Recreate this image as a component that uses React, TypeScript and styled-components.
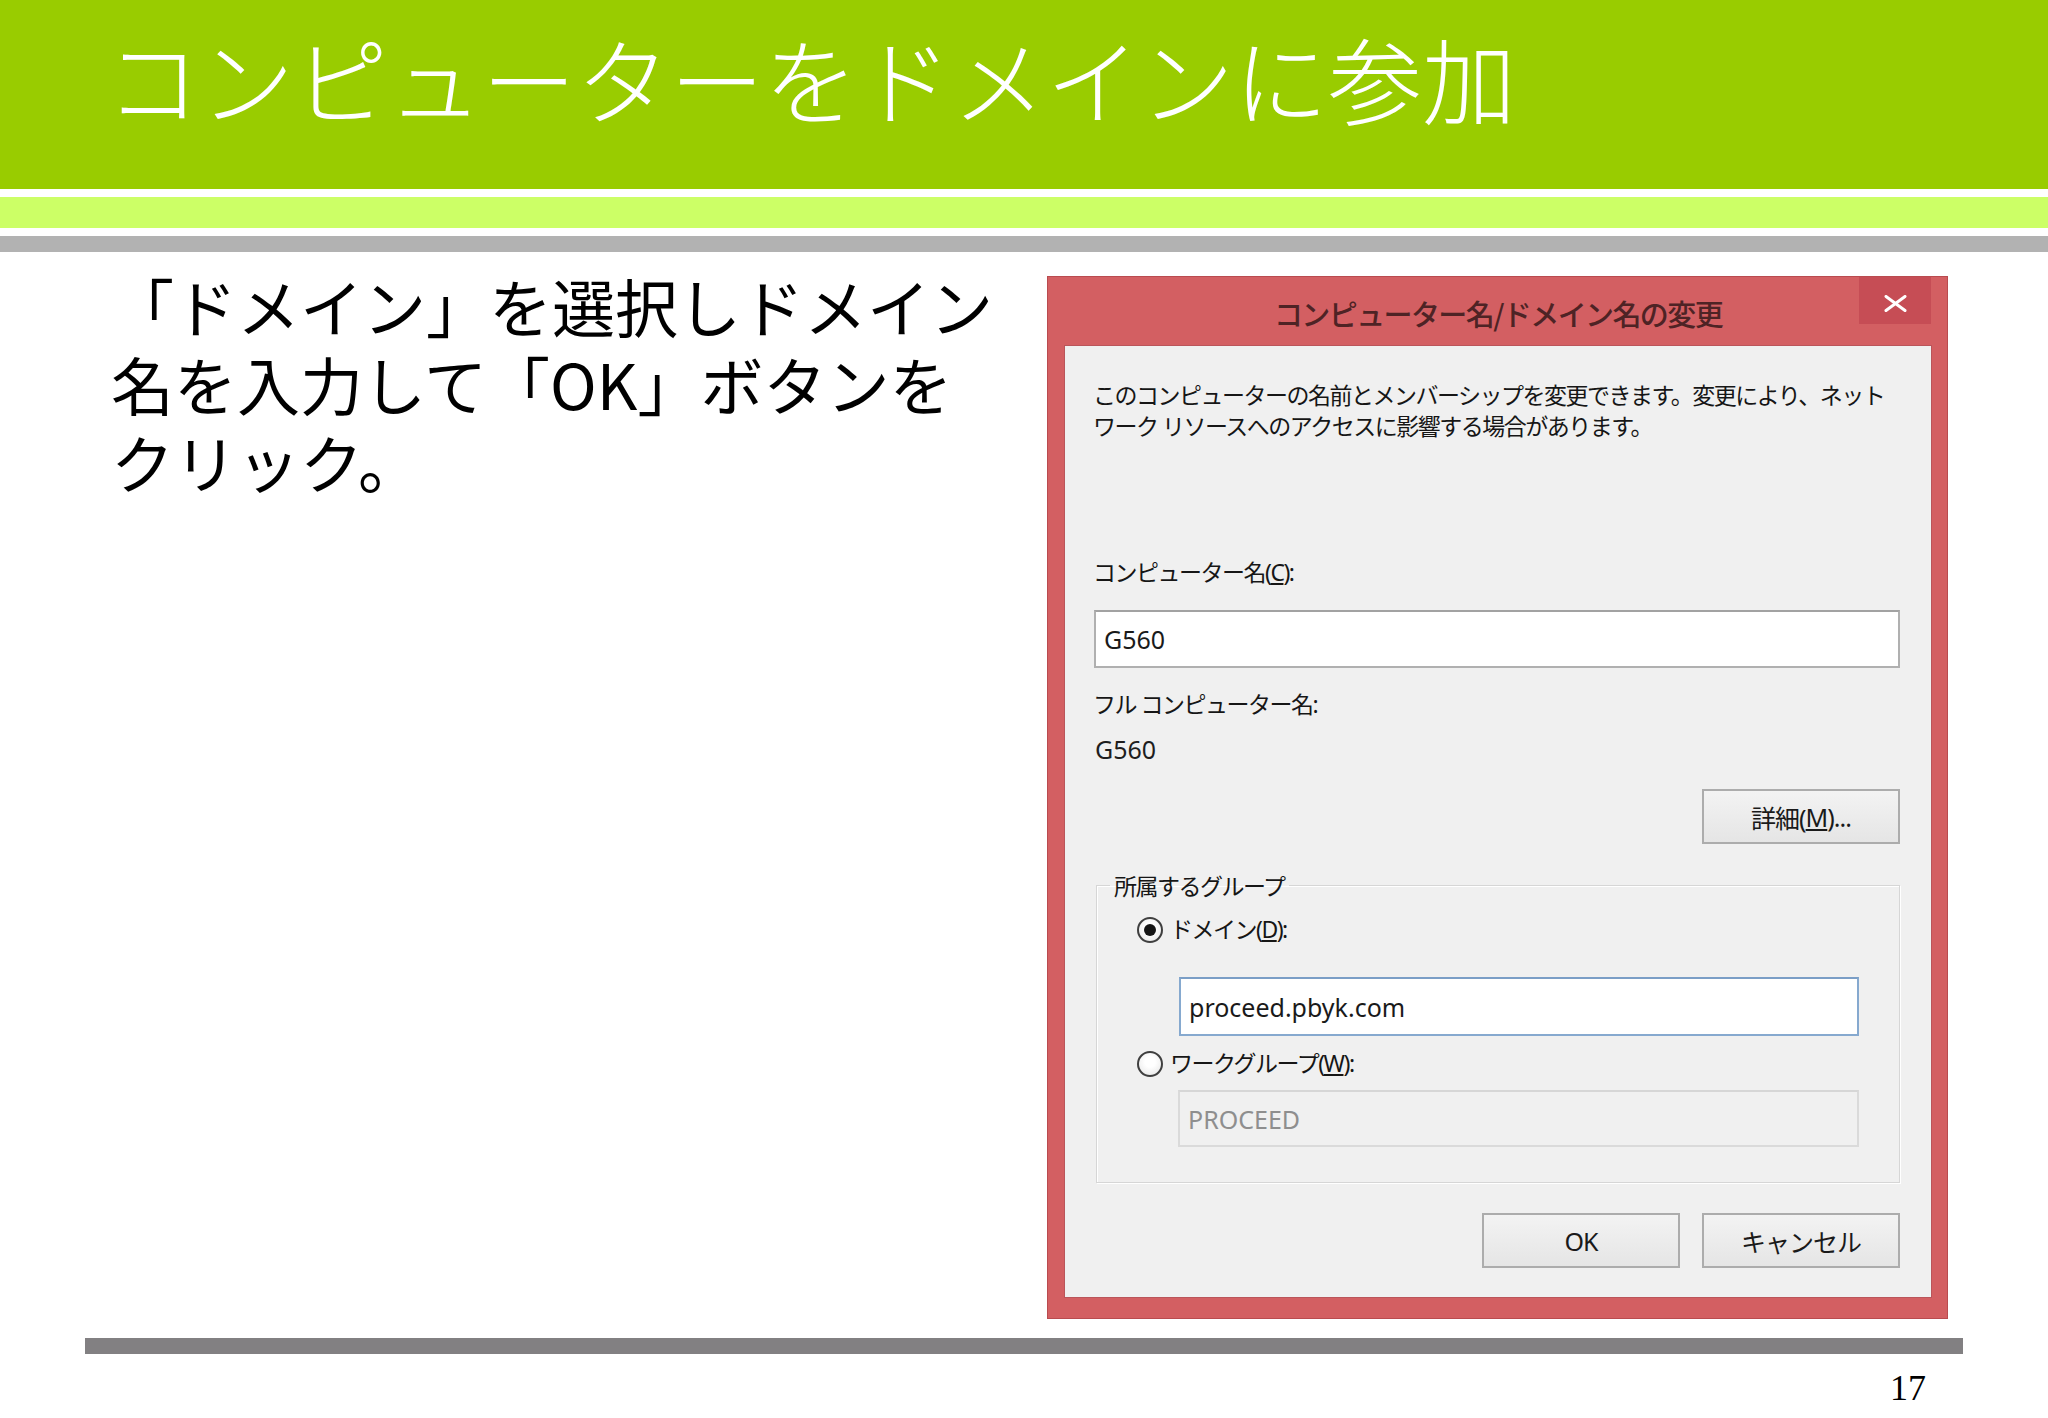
import React from "react";
import styled, { createGlobalStyle } from "styled-components";

const GlobalStyle = createGlobalStyle`
  html, body { margin: 0; padding: 0; background: #ffffff; }
  body { font-family: "Noto Sans CJK JP", sans-serif; }
  * { box-sizing: border-box; }
`;

const Page = styled.div`
  width: 2048px;
  height: 1418px;
  overflow: hidden;
  display: flex;
  flex-direction: column;
  background: #ffffff;
`;

const TitleBand = styled.header`
  height: 189px;
  background: #99cc00;
  padding: 30px 0 0 106px;
`;

const Title = styled.h1`
  margin: 0;
  font-family: "Noto Sans CJK JP", sans-serif;
  font-size: 94px;
  line-height: 94px;
  font-weight: 300;
  color: #ffffff;
  white-space: nowrap;
`;

const Stripe = styled.div<{ $color: string; $h: number }>`
  height: ${(p) => p.$h}px;
  margin-top: 8px;
  background: ${(p) => p.$color};
`;

const Content = styled.main`
  display: flex;
  justify-content: space-between;
  align-items: flex-start;
  padding: 14px 100px 0 111px;
  height: 1067px;
`;

const Lead = styled.div`
  display: flex;
  flex-direction: column;
  font-family: "Noto Sans CJK JP", sans-serif;
  font-size: 63px;
  line-height: 78px;
  color: #000000;
`;

const LeadLine = styled.span`
  display: block;
  height: 78px;
  white-space: nowrap;
`;

const Dialog = styled.section`
  width: 901px;
  height: 1043px;
  margin-top: 10px;
  background: #d35f62;
  border: 1px solid #b94b4f;
  padding: 0 16px 21px 17px;
  display: flex;
  flex-direction: column;
  font-family: "Noto Sans", "Noto Sans CJK JP", sans-serif;
`;

const TitleBar = styled.div`
  position: relative;
  height: 69px;
  display: flex;
  align-items: center;
  justify-content: center;
  padding-top: 2px;
`;

const DialogTitle = styled.span`
  font-family: "Noto Sans CJK JP", sans-serif;
  font-size: 29px;
  font-weight: 500;
  letter-spacing: -1.6px;
  color: #4e2325;
`;

const CloseButton = styled.div`
  position: absolute;
  top: 0;
  right: 0;
  width: 72px;
  height: 47px;
  background: #c64d55;
  display: flex;
  align-items: center;
  justify-content: center;
  padding-top: 6px;
`;

const Panel = styled.div`
  flex: 1;
  background: #f0f0f0;
  box-shadow: 0 0 0 1px #ba555a;
  padding: 34px 31px 0 28px;
  display: flex;
  flex-direction: column;
`;

const Text = styled.div<{ $mt?: number }>`
  margin-top: ${(p) => p.$mt ?? 0}px;
  font-size: 23px;
  line-height: 31px;
  letter-spacing: -1.5px;
  color: #161616;
  white-space: nowrap;
`;

const Value = styled.div<{ $mt?: number }>`
  margin-top: ${(p) => p.$mt ?? 0}px;
  font-family: "Noto Sans", sans-serif;
  font-size: 25px;
  line-height: 31px;
  color: #1e1e1e;
  padding-left: 2px;
`;

type BoxVariant = "normal" | "focus" | "disabled";

const TextBox = styled.div<{ $variant: BoxVariant; $mt: number; $ml?: number; $h: number }>`
  height: ${(p) => p.$h}px;
  margin-top: ${(p) => p.$mt}px;
  margin-left: ${(p) => p.$ml ?? 1}px;
  border: 2px solid
    ${(p) => (p.$variant === "focus" ? "#86a9cf" : p.$variant === "disabled" ? "#dadada" : "#b0b0b0")};
  border-top-color: ${(p) => (p.$variant === "focus" ? "#7b9ec6" : p.$variant === "disabled" ? "#d6d6d6" : "#a2a2a2")};
  background: ${(p) => (p.$variant === "disabled" ? "#f0f0f0" : "#ffffff")};
  padding-left: 8px;
  display: flex;
  align-items: center;
  font-family: "Noto Sans", sans-serif;
  font-size: 25px;
  color: ${(p) => (p.$variant === "disabled" ? "#8e8e8e" : "#1a1a1a")};
`;

const ButtonRow = styled.div<{ $mt: number }>`
  margin-top: ${(p) => p.$mt}px;
  display: flex;
  justify-content: flex-end;
  gap: 22px;
`;

const Button = styled.div`
  width: 198px;
  height: 55px;
  border: 2px solid #acacac;
  background: linear-gradient(#f3f3f3, #e5e5e5);
  display: flex;
  align-items: center;
  justify-content: center;
  font-size: 25px;
  letter-spacing: -1px;
  color: #1a1a1a;
`;

const GroupBox = styled.fieldset`
  margin: 26px 0 0 3px;
  padding: 0 40px 35px 0;
  border: 1px solid #d6d6d6;
  box-shadow: inset 1px 1px 0 #ffffff, 1px 1px 0 #ffffff;
  min-width: 0;
`;

const GroupLegend = styled.legend`
  margin-left: 13px;
  padding: 0 4px;
  font-family: "Noto Sans CJK JP", sans-serif;
  font-size: 23px;
  line-height: 31px;
  letter-spacing: -1.5px;
  color: #161616;
`;

const RadioRow = styled.div<{ $mt: number }>`
  margin-top: ${(p) => p.$mt}px;
  margin-left: 40px;
  height: 31px;
  display: flex;
  align-items: center;
  gap: 7px;
`;

const Radio = styled.span<{ $checked?: boolean }>`
  width: 26px;
  height: 26px;
  flex: none;
  border-radius: 50%;
  border: 2px solid #3f3f3f;
  background: radial-gradient(circle at 50% 40%, #ffffff 30%, #e4e4e4 100%);
  display: flex;
  align-items: center;
  justify-content: center;
  &::after {
    content: "";
    width: 12px;
    height: 12px;
    border-radius: 50%;
    background: ${(p) => (p.$checked ? "#151515" : "transparent")};
  }
`;

const FooterRule = styled.div`
  height: 16px;
  margin: 19px 85px 0;
  background: #828082;
`;

const PageNum = styled.div`
  margin-top: 16px;
  padding-right: 122px;
  text-align: right;
  font-family: "Liberation Serif", serif;
  font-size: 36px;
  line-height: 36px;
  color: #000000;
`;

export default function App() {
  return (
    <Page>
      <GlobalStyle />
      <TitleBand>
        <Title>コンピューターをドメインに参加</Title>
      </TitleBand>
      <Stripe $color="#ccff66" $h={31} />
      <Stripe $color="#b2b2b2" $h={16} />
      <Content>
        <Lead>
          <LeadLine>「ドメイン」を選択しドメイン</LeadLine>
          <LeadLine>名を入力して「OK」ボタンを</LeadLine>
          <LeadLine>クリック。</LeadLine>
        </Lead>
        <Dialog>
          <TitleBar>
            <DialogTitle>コンピューター名/ドメイン名の変更</DialogTitle>
            <CloseButton>
              <svg width="25" height="17" viewBox="0 0 25 17">
                <path d="M3 1.5 L22 15.5 M22 1.5 L3 15.5" stroke="#ffffff" strokeWidth="3" strokeLinecap="round" fill="none" />
              </svg>
            </CloseButton>
          </TitleBar>
          <Panel>
            <Text>
              このコンピューターの名前とメンバーシップを変更できます。変更により、ネット
              <br />
              ワーク リソースへのアクセスに影響する場合があります。
            </Text>
            <Text $mt={115}>
              コンピューター名(<u>C</u>):
            </Text>
            <TextBox $variant="normal" $mt={22} $h={58}>
              G560
            </TextBox>
            <Text $mt={21}>フル コンピューター名:</Text>
            <Value $mt={14}>G560</Value>
            <ButtonRow $mt={24}>
              <Button>
                詳細(<u>M</u>)...
              </Button>
            </ButtonRow>
            <GroupBox>
              <GroupLegend>所属するグループ</GroupLegend>
              <RadioRow $mt={13}>
                <Radio $checked />
                <Text>
                  ドメイン(<u>D</u>):
                </Text>
              </RadioRow>
              <TextBox $variant="focus" $mt={32} $ml={82} $h={59}>
                proceed.pbyk.com
              </TextBox>
              <RadioRow $mt={12}>
                <Radio />
                <Text>
                  ワークグループ(<u>W</u>):
                </Text>
              </RadioRow>
              <TextBox $variant="disabled" $mt={11} $ml={81} $h={57}>
                PROCEED
              </TextBox>
            </GroupBox>
            <ButtonRow $mt={30}>
              <Button>OK</Button>
              <Button>キャンセル</Button>
            </ButtonRow>
          </Panel>
        </Dialog>
      </Content>
      <FooterRule />
      <PageNum>17</PageNum>
    </Page>
  );
}
